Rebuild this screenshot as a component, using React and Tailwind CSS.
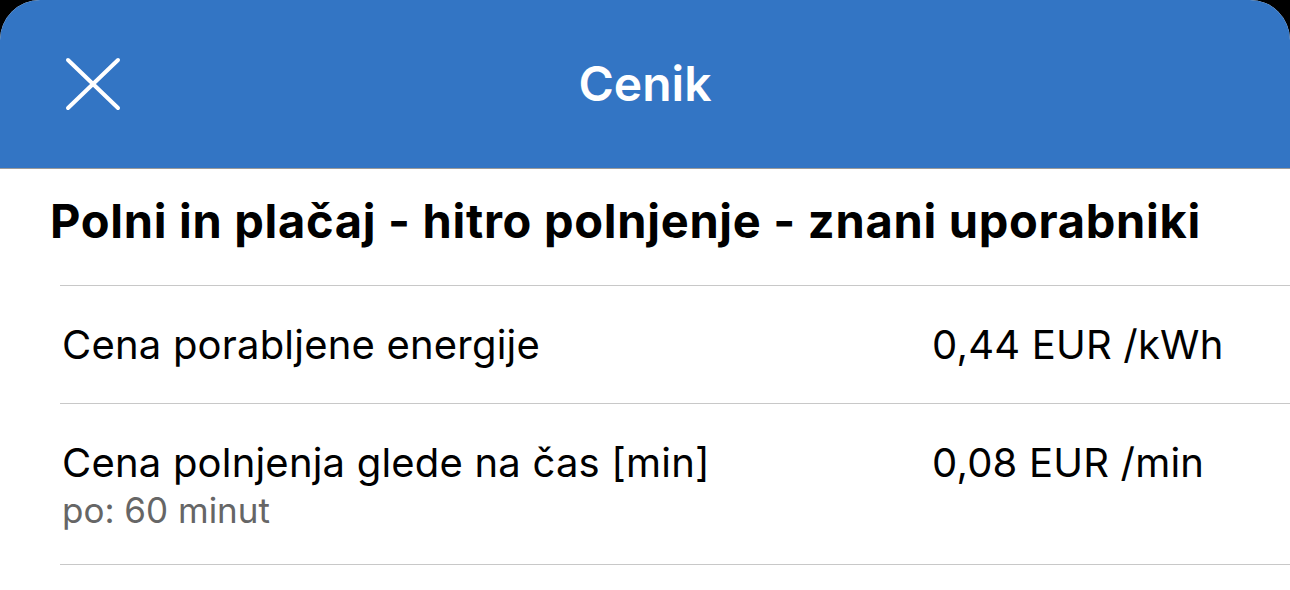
const rows = [
  { label: 'Cena porabljene energije', value: '0,44 EUR /kWh', height: 'h-[118px]' },
  { label: 'Cena polnjenja glede na čas [min]', value: '0,08 EUR /min', note: 'po: 60 minut', height: 'h-[161px]' },
];

function CloseIcon() {
  return (
    <svg width="56" height="54" viewBox="0 0 56 54" fill="none" stroke="currentColor" strokeWidth="4" strokeLinecap="round">
      <line x1="3" y1="3" x2="53" y2="51" />
      <line x1="53" y1="3" x2="3" y2="51" />
    </svg>
  );
}

export default function App() {
  return (
    <div className="h-[590px] w-[1290px] overflow-hidden bg-black" style={{ fontFamily: 'Inter, "Noto Sans", sans-serif' }}>
      <div className="h-full overflow-hidden rounded-t-[40px] bg-white">
        {/* Header */}
        <div className="relative flex h-[169px] items-center justify-center border-b border-[#9a9a9a] bg-[#3375c4]">
          <button className="absolute left-[65px] top-[57px] text-white">
            <CloseIcon />
          </button>
          <h1 className="text-[48px] font-semibold leading-[58px] text-white">Cenik</h1>
        </div>

        {/* Section title */}
        <div className="h-[116px] pl-[50px] pt-[24px]">
          <h2 className="text-[47px] font-bold leading-[56px] tracking-[0.015em] text-black">
            Polni in plačaj - hitro polnjenje - znani uporabniki
          </h2>
        </div>

        {/* Price rows */}
        <div className="ml-[60px] border-t border-[#c8c8c8]">
          {rows.map((row) => (
            <div key={row.label} className={`flex border-b border-[#c8c8c8] pl-[2px] pt-[35px] ${row.height}`}>
              <div className="w-[870px]">
                <div className="text-[40px] leading-[48px] tracking-[0.005em] text-black">{row.label}</div>
                {row.note && <div className="text-[35px] leading-[46px] text-[#666666]">{row.note}</div>}
              </div>
              <div className="text-[40px] leading-[48px] tracking-[0.005em] text-black">{row.value}</div>
            </div>
          ))}
        </div>
      </div>
    </div>
  );
}
